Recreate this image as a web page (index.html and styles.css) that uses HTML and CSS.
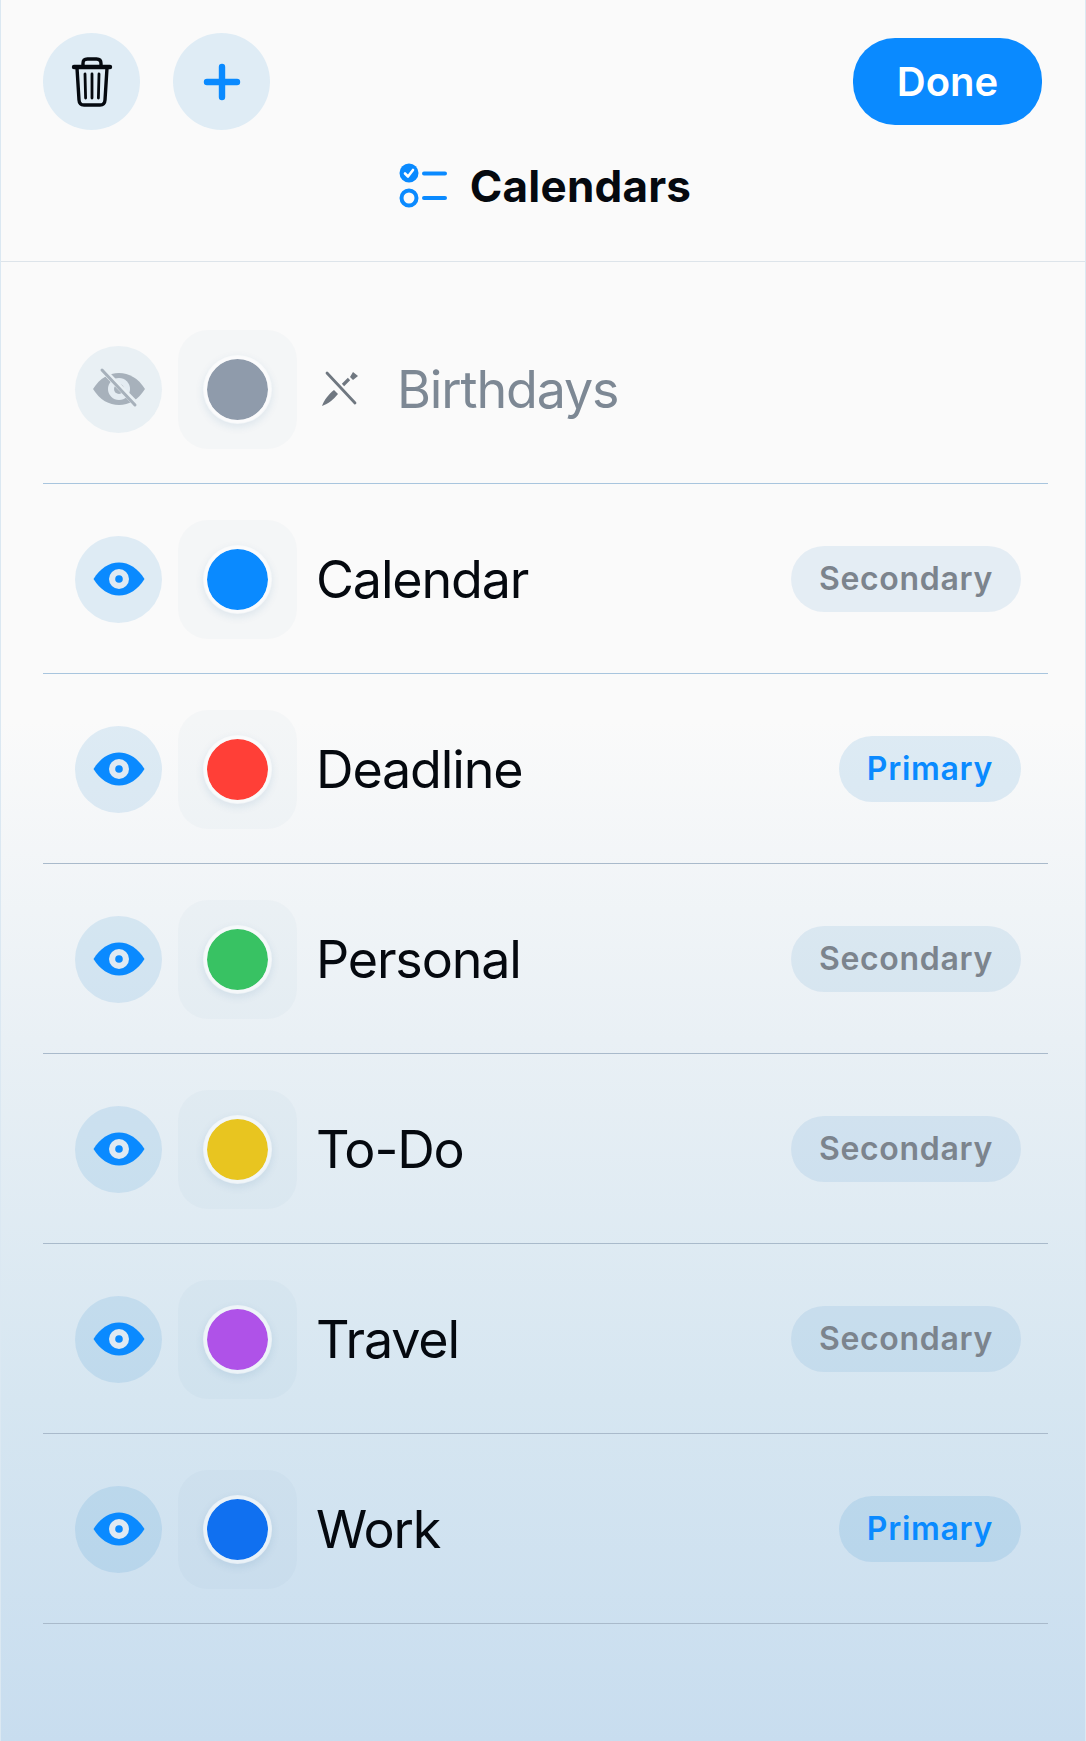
FILE: index.html
```html
<!DOCTYPE html>
<html lang="en">
<head>
  <meta charset="UTF-8" />
  <meta name="viewport" content="width=device-width, initial-scale=1.0" />
  <title>Calendars</title>
  <link rel="stylesheet" href="styles.css">
</head>
<body>
  <svg width="0" height="0" class="defs">
    <symbol id="eye" viewBox="0 0 52 34">
      <path d="M0.5 17C7 6.500 16 0.500 26 0.500S45 6.500 51.500 17C45 27.500 36 33.500 26 33.500S7 27.500 0.500 17Z" fill="currentColor"/>
      <circle cx="26" cy="17" r="10" fill="#dfe9f2"/>
      <circle cx="26" cy="17" r="3.800" fill="currentColor"/>
    </symbol>
  </svg>

  <header class="top">
    <div class="toolbar">
      <div class="tools">
        <button class="round" aria-label="Delete">
          <svg width="42" height="50" viewBox="0 0 42 50" fill="none" stroke="#05090f" stroke-linecap="round" stroke-linejoin="round">
            <path d="M12 9V6.500C12 3.500 13.500 2 16.500 2H25.500C28.500 2 30 3.500 30 6.500V9" stroke-width="3.400"/>
            <path d="M3 10H39" stroke-width="4.400"/>
            <path d="M6 11L8 43C8.200 46.500 10 48 13 48H29C32 48 33.800 46.500 34 43L36 11" stroke-width="3.400"/>
            <path d="M14 17L14.600 41M21 17V41M28 17L27.400 41" stroke-width="2.800"/>
          </svg>
        </button>
        <button class="round" aria-label="Add">
          <svg width="38" height="38" viewBox="0 0 38 38" fill="none" stroke="#0a8aff" stroke-width="6.400" stroke-linecap="round">
            <path d="M19 4V34M4 19H34"/>
          </svg>
        </button>
      </div>
      <button class="done">Done</button>
    </div>
    <h1 class="title">
      <svg width="48" height="46" viewBox="0 0 48 46" fill="none">
        <circle cx="10" cy="10" r="9.500" fill="#0a8aff"/>
        <path d="M6 10.500L9 13.500L14 7" stroke="#fff" stroke-width="2.600" stroke-linecap="round" stroke-linejoin="round"/>
        <circle cx="10" cy="35" r="7.500" stroke="#0a8aff" stroke-width="4"/>
        <path d="M25 10.500H46M25 35H46" stroke="#0a8aff" stroke-width="4" stroke-linecap="round"/>
      </svg>
      Calendars
    </h1>
  </header>

  <ul class="list">
    <li class="row muted">
      <span class="eye-btn">
        <svg width="54" height="44" viewBox="0 0 54 44">
          <path d="M1 22C8 11 17 6 27 6S46 11 53 22C46 33 37 38 27 38S8 33 1 22Z" fill="#a7b1bb"/>
          <circle cx="27" cy="22" r="11" fill="#e4ecf2"/>
          <circle cx="27" cy="22" r="5" fill="#a7b1bb"/>
          <path d="M12 4L45 38" stroke="#e9f0f4" stroke-width="6"/>
          <path d="M10 3L43 38" stroke="#a7b1bb" stroke-width="3" stroke-linecap="round"/>
        </svg>
      </span>
      <span class="swatch"><span class="dot dot-grey"></span></span>
      <svg class="pen" width="38" height="38" viewBox="0 0 38 38" fill="none">
        <path d="M6 3L34 33" stroke="#6f7780" stroke-width="2.800" stroke-linecap="round"/>
        <path d="M1 36C3 30 8 24 13 20L17 24C13 29 7 34 1 36Z" fill="#6f7780"/>
        <path d="M22 15L28 9" stroke="#6f7780" stroke-width="3.200"/>
        <path d="M29 7L32 2L37 6L32 10Z" fill="#6f7780"/>
      </svg>
      <span class="name">Birthdays</span>
    </li>
    <li class="row">
      <span class="eye-btn"><svg class="eye" width="52" height="34"><use href="#eye"/></svg></span>
      <span class="swatch"><span class="dot dot-blue"></span></span>
      <span class="name">Calendar</span>
      <span class="badge">Secondary</span>
    </li>
    <li class="row">
      <span class="eye-btn"><svg class="eye" width="52" height="34"><use href="#eye"/></svg></span>
      <span class="swatch"><span class="dot dot-red"></span></span>
      <span class="name">Deadline</span>
      <span class="badge primary">Primary</span>
    </li>
    <li class="row">
      <span class="eye-btn"><svg class="eye" width="52" height="34"><use href="#eye"/></svg></span>
      <span class="swatch"><span class="dot dot-green"></span></span>
      <span class="name">Personal</span>
      <span class="badge">Secondary</span>
    </li>
    <li class="row">
      <span class="eye-btn"><svg class="eye" width="52" height="34"><use href="#eye"/></svg></span>
      <span class="swatch"><span class="dot dot-yellow"></span></span>
      <span class="name">To-Do</span>
      <span class="badge">Secondary</span>
    </li>
    <li class="row">
      <span class="eye-btn"><svg class="eye" width="52" height="34"><use href="#eye"/></svg></span>
      <span class="swatch"><span class="dot dot-purple"></span></span>
      <span class="name">Travel</span>
      <span class="badge">Secondary</span>
    </li>
    <li class="row">
      <span class="eye-btn"><svg class="eye" width="52" height="34"><use href="#eye"/></svg></span>
      <span class="swatch"><span class="dot dot-work"></span></span>
      <span class="name">Work</span>
      <span class="badge primary">Primary</span>
    </li>
  </ul>
</body>
</html>
```

FILE: styles.css
```css
* {
  box-sizing: border-box;
}

body {
  margin: 0;
  min-height: 100vh;
  font-family: Inter, 'Liberation Sans', sans-serif;
  color: #05090f;
  background: linear-gradient(to bottom, #fafafa 0, #fafafa 720px, #e9f0f5 1040px, #d6e6f1 1400px, #c8ddef 1741px);
  border-left: 1px solid #dbe8f2;
  border-right: 1px solid #dbe8f2;
}

.defs {
  display: block;
}

/* header */
.top {
  height: 262px;
  padding: 33px 43px 0 42px;
  border-bottom: 1px solid #dde4ea;
}

.toolbar {
  display: flex;
  justify-content: space-between;
  align-items: flex-start;
}

.tools {
  display: flex;
  gap: 33px;
}

.round {
  width: 97px;
  height: 97px;
  padding: 0;
  border: none;
  border-radius: 50%;
  background: #dfecf5;
  display: flex;
  align-items: center;
  justify-content: center;
}

.done {
  width: 189px;
  height: 87px;
  margin-top: 5px;
  padding: 0;
  border: none;
  border-radius: 42px;
  background: #0a8aff;
  color: white;
  font-family: inherit;
  font-size: 40px;
  font-weight: 600;
}

.title {
  margin: 28px 0 0 5px;
  display: flex;
  align-items: center;
  justify-content: center;
  gap: 23px;
  font-size: 44px;
  letter-spacing: 0.2px;
  line-height: 56px;
  font-weight: 700;
}

/* calendar rows */
.list {
  list-style: none;
  margin: 0 37px 0 42px;
  padding: 32px 0 0;
}

.row {
  height: 190px;
  padding: 1px 27px 0 32px;
  display: flex;
  align-items: center;
  border-bottom: 1px solid #a9bacb;
}

.row:nth-child(-n+2) {
  border-bottom-color: #a8c5de;
}

.eye-btn {
  width: 87px;
  height: 87px;
  flex-shrink: 0;
  border-radius: 50%;
  background: rgba(0, 120, 200, 0.11);
  display: flex;
  align-items: center;
  justify-content: center;
}

.eye {
  color: #0a8aff;
}

.muted .eye-btn {
  background: #e9f0f4;
}

.swatch {
  width: 119px;
  height: 119px;
  margin: 0 19px 0 16px;
  flex-shrink: 0;
  border-radius: 30px;
  background: rgba(0, 80, 140, 0.022);
  display: flex;
  align-items: center;
  justify-content: center;
}

.dot {
  width: 69px;
  height: 69px;
  border-radius: 50%;
  border: 4px solid rgba(255, 255, 255, 0.6);
  background-clip: padding-box;
  box-shadow: 0 3px 8px rgba(20, 90, 150, 0.1);
}

.dot-grey { background-color: #8f9bab; }
.dot-blue { background-color: #0a8aff; }
.dot-red { background-color: #ff3f37; }
.dot-green { background-color: #38c263; }
.dot-yellow { background-color: #e8c520; }
.dot-purple { background-color: #af52e8; }
.dot-work { background-color: #1070f0; }

.name {
  padding-top: 2px;
  font-size: 52px;
  font-weight: 380;
  letter-spacing: -1.15px;
  line-height: 64px;
}

.muted .name {
  margin-left: 38px;
  color: #7d8894;
}

.pen {
  flex-shrink: 0;
  margin-left: 5px;
}

.badge {
  margin-left: auto;
  height: 66px;
  padding: 0 28px;
  border-radius: 33px;
  background: rgba(0, 110, 190, 0.085);
  color: #7c848d;
  font-size: 32px;
  font-weight: 600;
  letter-spacing: 0.7px;
  line-height: 66px;
}

.badge.primary {
  background: rgba(0, 120, 200, 0.11);
  color: #0a8aff;
}
```
